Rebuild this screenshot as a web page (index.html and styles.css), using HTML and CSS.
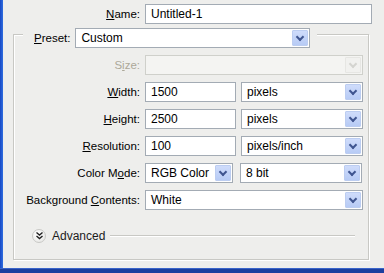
FILE: index.html
```html
<!DOCTYPE html>
<html lang="en">
<head>
  <meta charset="UTF-8">
  <title>New</title>
  <link rel="stylesheet" href="styles.css">
</head>
<body>
  <div class="window">
    <div class="frame-left"></div>
    <div class="dialog">
      <div class="row name-row">
        <label class="label"><u>N</u>ame:</label>
        <div class="field name-field">Untitled-1</div>
      </div>

      <div class="group">
        <div class="group-head">
          <label class="preset-label"><u>P</u>reset:</label>
          <div class="field select preset-select">Custom<span class="drop"></span></div>
        </div>

        <div class="row">
          <label class="label disabled">S<u>i</u>ze:</label>
          <div class="field select wide off"><span class="drop"></span></div>
        </div>
        <div class="row">
          <label class="label"><u>W</u>idth:</label>
          <div class="field num">1500</div>
          <div class="field select unit">pixels<span class="drop"></span></div>
        </div>
        <div class="row">
          <label class="label"><u>H</u>eight:</label>
          <div class="field num">2500</div>
          <div class="field select unit">pixels<span class="drop"></span></div>
        </div>
        <div class="row">
          <label class="label"><u>R</u>esolution:</label>
          <div class="field num">100</div>
          <div class="field select unit">pixels/inch<span class="drop"></span></div>
        </div>
        <div class="row">
          <label class="label">Color M<u>o</u>de:</label>
          <div class="field select mode">RGB Color<span class="drop"></span></div>
          <div class="field select unit">8 bit<span class="drop"></span></div>
        </div>
        <div class="row">
          <label class="label">Background <u>C</u>ontents:</label>
          <div class="field select wide">White<span class="drop"></span></div>
        </div>

        <div class="advanced">
          <span class="expander">
            <svg width="9" height="9" viewBox="0 0 9 9"><path d="M1.5 1.5 L4.5 4 L7.5 1.5 M1.5 5 L4.5 7.5 L7.5 5" fill="none" stroke="#222" stroke-width="1.4"/></svg>
          </span>
          <span class="adv-text">Advanced</span>
          <span class="adv-line"></span>
        </div>
      </div>
    </div>
  </div>
  <div class="frame-bottom"></div>
</body>
</html>
```

FILE: styles.css
```css
* { margin: 0; padding: 0; box-sizing: border-box; }
html, body { width: 384px; height: 273px; overflow: hidden; }
body {
  font-family: 'Liberation Sans', Arial, sans-serif;
  font-size: 11.5px;
  color: #000;
  background: #eeeeec;
  display: flex;
  flex-direction: column;
}
u { text-decoration: underline; text-underline-offset: 1px; }

.window { display: flex; flex: 1; }
.frame-left {
  width: 3px;
  background: linear-gradient(90deg, #1748c4, #2f6ee0);
}
.dialog { flex: 1; padding-top: 4px; }
.frame-bottom {
  height: 5px;
  background: #1b3f9f;
  border-top: 1px solid #3a64c9;
}

.row {
  display: flex;
  align-items: center;
  gap: 5px;
  margin-top: 7px;
}
.label {
  width: 126px;
  text-align: right;
  white-space: nowrap;
}
.disabled { color: #aca899; }

.name-row { margin-top: 0; }
.name-row .label { width: 137px; }

.field {
  position: relative;
  height: 20px;
  line-height: 18px;
  padding: 0 5px;
  background: #fff;
  border: 1px solid #a3abb4;
  font-size: 12px;
  white-space: nowrap;
}
.name-field { width: 227px; }
.num { width: 91px; }
.unit { width: 122px; }
.mode { width: 88px; margin-right: 2px; }
.wide { width: 218px; }
.off { background: #f4f4f2; border-color: #cfd0cb; }

.drop {
  position: absolute;
  right: 1px;
  top: 1px;
  width: 16px;
  height: 16px;
  background: linear-gradient(#cfdcfb, #b7cbf5);
  border: 1px solid #bccdf1;
  border-radius: 1px;
}
.drop::after {
  content: "";
  position: absolute;
  left: 4px;
  top: 3px;
  width: 4px;
  height: 4px;
  border-right: 2px solid #3f5590;
  border-bottom: 2px solid #3f5590;
  transform: rotate(45deg);
}
.off .drop { background: #f1f1ef; border-color: #e6e6e3; }
.off .drop::after { border-color: #d4d4d0; }

.group {
  margin: 10px 0 0 10px;
  width: 356px;
  height: 226px;
  border: 1px solid #c8c8c4;
  box-shadow: inset 1px 1px 0 #fff, 1px 1px 0 #fff;
}
.group-head {
  display: flex;
  align-items: center;
  gap: 5px;
  width: 294px;
  margin: -7px 0 0 9px;
  padding: 0 7px 0 11px;
  background: #eeeeec;
}
.preset-select { width: 235px; }

.advanced {
  display: flex;
  align-items: center;
  margin: 18px 0 0 18px;
  height: 15px;
}
.expander {
  width: 14px;
  height: 14px;
  border-radius: 50%;
  border: 1px solid #c9c9c6;
  background: radial-gradient(circle at 40% 35%, #ffffff, #e3e3e0);
  display: flex;
  align-items: center;
  justify-content: center;
}
.adv-text { margin-left: 6px; font-size: 12px; color: #1c1c1c; }
.adv-line {
  flex: 1;
  margin: 1px 13px 0 5px;
  height: 2px;
  border-top: 1px solid #c8c8c4;
  border-bottom: 1px solid #fff;
}
```
